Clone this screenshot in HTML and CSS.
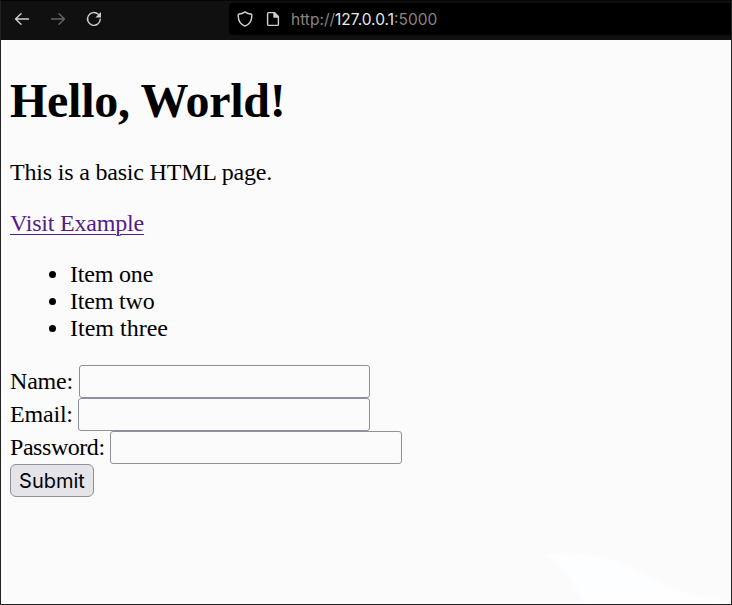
FILE: index.html
```html
<!DOCTYPE html>
<html lang="en">
<head>
<meta charset="utf-8">
<title>Hello, World!</title>
<link rel="stylesheet" href="styles.css">
</head>
<body>
<div class="window">
  <header class="toolbar">
    <nav class="nav">
      <svg class="icon" viewBox="0 0 16 16"><path d="M14.500 8H1.500M7 2.700 1.500 8 7 13.300"/></svg>
      <svg class="icon disabled" viewBox="0 0 16 16"><path d="M1.500 8h13M9 2.700 14.500 8 9 13.300"/></svg>
      <svg class="icon" viewBox="0 0 16 16"><path d="M14.300 8.300A6.400 6.400 0 1 1 12.300 3.300"/><path class="solid" d="M15 1v5.600H9.400z"/></svg>
    </nav>
    <div class="address">
      <svg class="icon" viewBox="0 0 16 16"><path d="M8 .9C6 2.500 3.800 3.100 1.300 3.300C.8 8.500 2.700 12.800 8 15.200C13.300 12.800 15.200 8.500 14.700 3.300C12.200 3.100 10 2.500 8 .9z"/></svg>
      <svg class="icon page-icon" viewBox="0 0 16 16"><path d="M3.600 1.600H9.400L13.400 5.600V13.200Q13.400 14.400 12.200 14.400H3.800Q2.600 14.400 2.600 13.200V2.600Q2.600 1.600 3.600 1.600zM9 1.600V6H13.400"/><path class="solid" d="M9 1.600V6h4.400z"/></svg>
      <span class="url">http://<b>127.0.0.1</b>:5000</span>
    </div>
  </header>
  <main class="page">
    <h1>Hello, World!</h1>
    <p>This is a basic HTML page.</p>
    <a href="#">Visit Example</a>
    <ul>
      <li>Item one</li>
      <li>Item two</li>
      <li class="wide">Item three</li>
    </ul>
    <form>
      <div class="row"><label class="label-name" for="name">Name:</label><input class="name" id="name" type="text"></div>
      <div class="row"><label class="label-email" for="email">Email:</label><input id="email" type="email"></div>
      <div class="row"><label class="label-password" for="password">Password:</label><input id="password" type="password"></div>
      <button type="button">Submit</button>
    </form>
    <svg class="swoosh" viewBox="0 0 190 56"><path d="M4 7C35 2 65 6 90 17S140 48 186 50V56H50C38 35 32 17 4 7z"/></svg>
  </main>
</div>
</body>
</html>
```
FILE: styles.css
```css
* { box-sizing: border-box; }
body { margin: 0; }
.window {
  width: 732px;
  height: 605px;
  border: 1px solid #222225;
  border-top-color: #050505;
  background: #fbfbfb;
  overflow: hidden;
}
.toolbar {
  display: flex;
  height: 39px;
  padding-top: 2px;
  background: #101010;
}
.nav {
  display: flex;
  gap: 20px;
  width: 228px;
  padding: 8px 0 0 13px;
}
.icon {
  width: 16px;
  height: 16px;
  fill: none;
  stroke: #d0d0d0;
  stroke-width: 1.4;
  stroke-linecap: round;
  stroke-linejoin: round;
}
.disabled { stroke: #666; }
.solid { fill: #d0d0d0; stroke: none; }
.address {
  display: flex;
  flex: 1;
  align-items: center;
  height: 32px;
  padding-left: 8px;
  border-radius: 4px 0 0 4px;
  background: #000;
}
.page-icon { margin-left: 12px; }
.url {
  margin-left: 10px;
  padding-top: 1px;
  color: #85857f;
  font: 15.5px/20px Inter, sans-serif;
}
.url b { color: #e8e8e8; font-weight: 400; }
.page {
  position: relative;
  height: 564px;
  padding: 33px 9px 0;
  color: #000;
  font: 24px/27px "Liberation Serif", serif;
  letter-spacing: -0.19px;
}
h1 {
  margin: 0 0 31px;
  font-size: 48px;
  line-height: 55px;
  letter-spacing: -0.28px;
}
p { margin: 0 0 24px; }
a {
  display: inline-block;
  color: #551a8b;
  text-decoration-thickness: 1px;
  text-underline-offset: 3px;
}
ul { margin: 24px 0 23px; padding-left: 60px; }
.wide { letter-spacing: 0; }
form { margin: 0; }
.row { display: flex; align-items: center; height: 33px; }
.label-name { width: 69px; }
.label-email { width: 68px; }
.label-password { width: 100px; letter-spacing: -0.45px; }
input {
  width: 292px;
  height: 33px;
  margin: 0;
  padding: 0 4px;
  border: 1px solid #8f8f9d;
  border-radius: 3px;
  background: transparent;
}
input.name { width: 291px; }
button {
  display: block;
  width: 84px;
  height: 33px;
  padding: 2px 0 0;
  border: 1px solid #8f8f9d;
  border-radius: 6px;
  background: #e5e4e9;
  color: #000;
  font: 20px/29px Inter, sans-serif;
}
.swoosh {
  position: absolute;
  right: 6px;
  bottom: 0;
  width: 190px;
  height: 56px;
  fill: #fdfeff;
  filter: blur(2px);
}
```
